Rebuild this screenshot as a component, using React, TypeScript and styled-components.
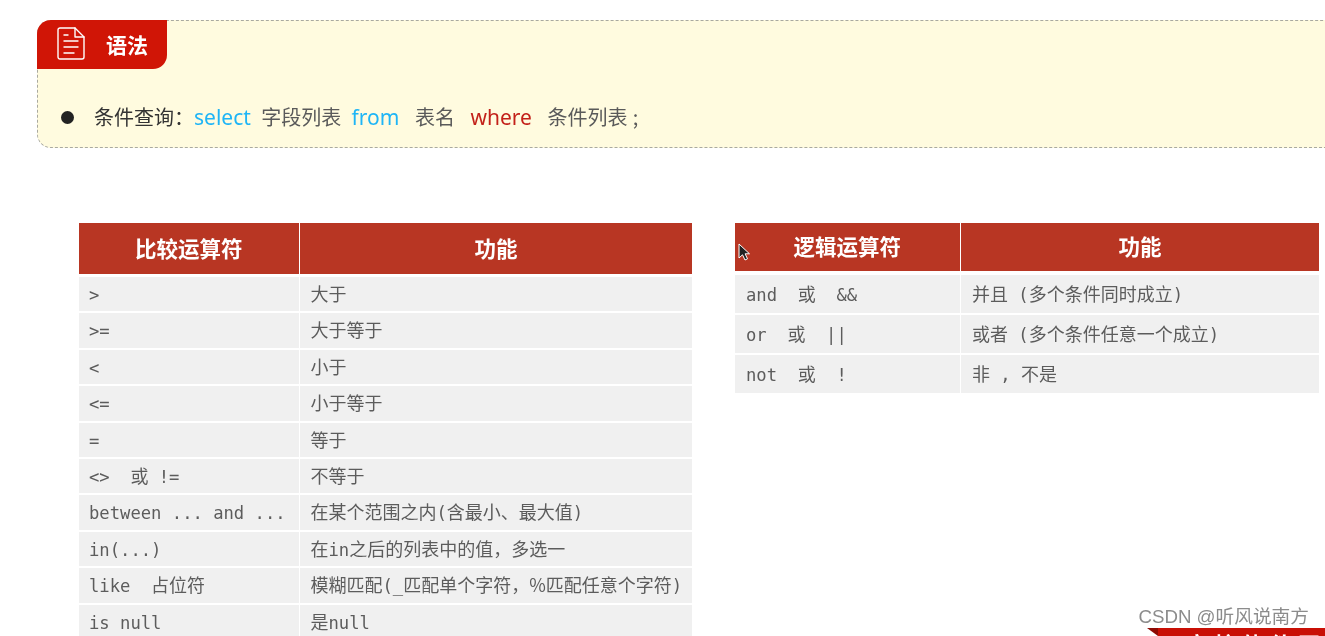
import React from "react";
import styled, { createGlobalStyle } from "styled-components";

const cjk = '"Noto Sans CJK SC", "Noto Sans", sans-serif';

const GlobalStyle = createGlobalStyle`
  html, body {
    margin: 0;
    padding: 0;
    background: #fff;
    overflow: hidden;
  }
`;

const Page = styled.div`
  position: relative;
  width: 1325px;
  height: 636px;
  overflow: hidden;
  padding: 20px 0 0 37px;
  box-sizing: border-box;
  font-family: ${cjk};
  color: #555;
  filter: blur(0.4px);
`;

const SyntaxBox = styled.section`
  width: 1320px;
  height: 128px;
  box-sizing: border-box;
  background: #fffbdf;
  border: 1px dashed #a9a9a0;
  border-radius: 14px 0 0 14px;
`;

const SyntaxTab = styled.div`
  display: flex;
  align-items: center;
  gap: 21px;
  width: 130px;
  height: 49px;
  margin: -1px 0 0 -1px;
  padding: 0 0 2px 20px;
  box-sizing: border-box;
  background: #d01506;
  border-radius: 14px 0 14px 0;
  color: #fff;
  font-size: 21px;
  font-weight: 700;
`;

const SyntaxLine = styled.div`
  display: flex;
  align-items: center;
  margin: 33px 0 0 23px;
  gap: 20px;
  height: 30px;
`;

const Bullet = styled.span`
  width: 13px;
  height: 13px;
  border-radius: 50%;
  background: #222;
`;

const SyntaxText = styled.p`
  margin: 0;
  font-size: 20px;
  line-height: 30px;
  white-space: pre;
  word-spacing: 0.7px;
  color: #5a5a5a;
`;

const Lead = styled.span`
  color: #333;
`;

const Keyword = styled.span<{ $tone: "blue" | "red" }>`
  font-family: "Noto Sans", sans-serif;
  font-size: 21px;
  color: ${(p) => (p.$tone === "blue" ? "#1fb5f6" : "#c3211a")};
`;

const Tables = styled.div`
  display: flex;
  align-items: flex-start;
  gap: 43px;
  margin: 75px 0 0 42px;
`;

const Table = styled.div<{ $width: number; $first: number; $rowHeight: number; $headerHeight: number }>`
  display: grid;
  width: ${(p) => p.$width}px;
  grid-template-columns: ${(p) => p.$first}px 1fr;
  grid-template-rows: ${(p) => p.$headerHeight}px;
  grid-auto-rows: ${(p) => p.$rowHeight}px;
  gap: 2px 1.5px;
  flex: none;
`;

const HeadCell = styled.div<{ $gapBelow: number; $lift: number }>`
  display: flex;
  align-items: center;
  justify-content: center;
  background: #b83623;
  color: #fff;
  font-size: 21.5px;
  font-weight: 700;
  margin-bottom: ${(p) => p.$gapBelow}px;
  padding-bottom: ${(p) => p.$lift}px;
`;

const Cell = styled.div<{ $pad: number; $line: number }>`
  padding-left: ${(p) => p.$pad}px;
  background: #f0f0f0;
  font-size: 18px;
  line-height: ${(p) => p.$line}px;
  color: #5c5c5c;
  white-space: pre;
`;

const Code = styled.span`
  font-family: "DejaVu Sans Mono", monospace;
  font-size: 17.2px;
`;

const Watermark = styled.div`
  position: absolute;
  right: 16px;
  bottom: 8px;
  font-size: 18.7px;
  line-height: 22px;
  color: #8c8c8c;
  font-family: "Liberation Sans", ${cjk};
  text-shadow: 0 0 1px #fff;
`;

const Banner = styled.div`
  position: absolute;
  left: 1158px;
  right: 0;
  top: 628px;
  height: 20px;
  background: #c90f05;
  color: #fff;
  font-size: 22px;
  font-weight: 700;
  line-height: 22px;
  padding: 4px 0 0 28px;
  letter-spacing: 6px;
  white-space: nowrap;
  &::before {
    content: "";
    position: absolute;
    left: -11px;
    top: 0;
    border-style: solid;
    border-width: 0 11px 8px 0;
    border-color: transparent #8e0b04 transparent transparent;
  }
`;

const Cursor = styled.svg`
  position: absolute;
  left: 738px;
  top: 243px;
`;

// ascii runs are set in the mono face, the rest (and %) stays in the CJK one
const mixed = (text: string) =>
  text.split(/([\x20-\x24\x26-\x7e]+)/).map((part, i) =>
    /^[\x20-\x24\x26-\x7e]+$/.test(part) ? <Code key={i}>{part}</Code> : part
  );

const compareRows = [
  [">", "大于"],
  [">=", "大于等于"],
  ["<", "小于"],
  ["<=", "小于等于"],
  ["=", "等于"],
  ["<>  或 !=", "不等于"],
  ["between ... and ...", "在某个范围之内(含最小、最大值)"],
  ["in(...)", "在in之后的列表中的值\uFF0C多选一"],
  ["like  占位符", "模糊匹配(_匹配单个字符\uFF0C%匹配任意个字符)"],
  ["is null", "是null"],
];

const logicRows = [
  ["and  或  &&", "并且 (多个条件同时成立)"],
  ["or  或  ||", "或者 (多个条件任意一个成立)"],
  ["not  或  !", "非 , 不是"],
];

const DocIcon = () => (
  <svg width="28" height="33" viewBox="0 0 28 33" fill="none" stroke="#fff" strokeWidth="1.4" strokeLinecap="round" strokeLinejoin="round">
    <path d="M3 1h15l9 9v20a2 2 0 0 1-2 2H3a2 2 0 0 1-2-2V3a2 2 0 0 1 2-2z" />
    <path d="M18 1v9h9" />
    <path d="M7 8h4M7 14h14M7 20h14M7 26h10" />
  </svg>
);

const App: React.FC = () => {
  return (
    <Page>
      <GlobalStyle />
      <SyntaxBox>
        <SyntaxTab>
          <DocIcon />
          语法
        </SyntaxTab>
        <SyntaxLine>
          <Bullet />
          <SyntaxText>
            <Lead>{"条件查询\uFF1A"}</Lead>
            <Keyword $tone="blue">select</Keyword>
            {"  字段列表  "}
            <Keyword $tone="blue">from</Keyword>
            {"   表名   "}
            <Keyword $tone="red">where</Keyword>
            {"   条件列表 ;"}
          </SyntaxText>
        </SyntaxLine>
      </SyntaxBox>

      <Tables>
        <Table $width={613} $first={219.5} $headerHeight={52} $rowHeight={34.4}>
          <HeadCell $gapBelow={1} $lift={2}>比较运算符</HeadCell>
          <HeadCell $gapBelow={1} $lift={2}>功能</HeadCell>
          {compareRows.map(([op, desc]) => (
            <React.Fragment key={op}>
              <Cell $pad={10} $line={32}>{mixed(op)}</Cell>
              <Cell $pad={10.5} $line={32}>{mixed(desc)}</Cell>
            </React.Fragment>
          ))}
        </Table>
        <Table $width={584} $first={224.5} $headerHeight={50} $rowHeight={38}>
          <HeadCell $gapBelow={2} $lift={4}>逻辑运算符</HeadCell>
          <HeadCell $gapBelow={2} $lift={4}>功能</HeadCell>
          {logicRows.map(([op, desc]) => (
            <React.Fragment key={op}>
              <Cell $pad={11} $line={36}>{mixed(op)}</Cell>
              <Cell $pad={11} $line={36}>{mixed(desc)}</Cell>
            </React.Fragment>
          ))}
        </Table>
      </Tables>

      <Cursor width="12" height="18" viewBox="0 0 12 18">
        <path d="M1 1v14l3.500-3.200L7 17l2.500-1.200-2.400-5H11.500z" fill="#222" stroke="#fff" strokeWidth="1" />
      </Cursor>
      <Banner>高校软件开发</Banner>
      <Watermark>CSDN @听风说南方</Watermark>
    </Page>
  );
};

export default App;
